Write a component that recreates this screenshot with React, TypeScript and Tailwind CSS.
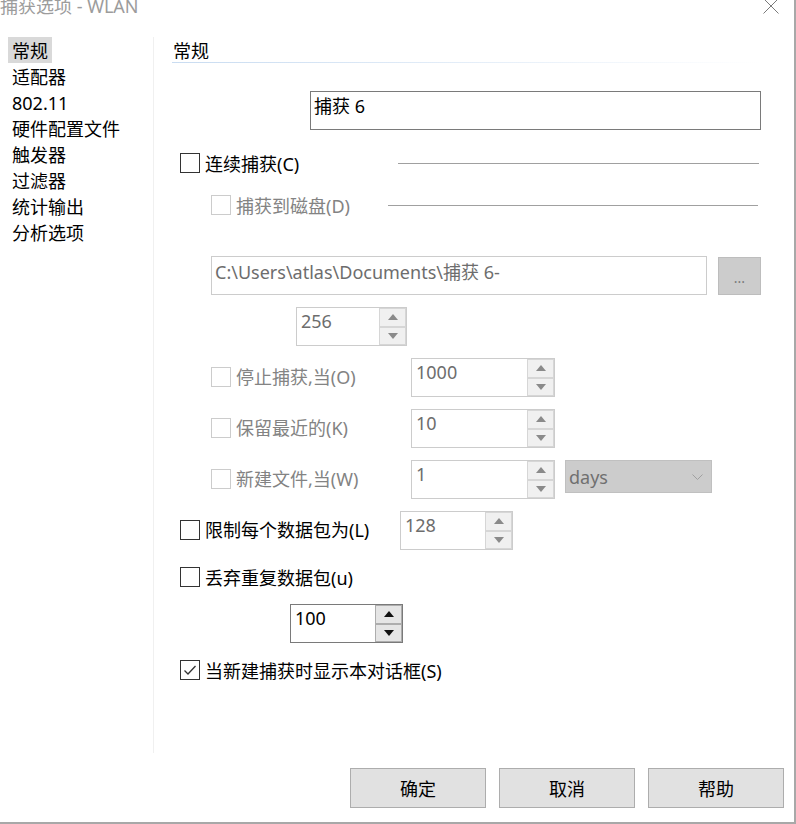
import React from "react"
import clsx from "clsx"

const font = { fontFamily: '"Noto Sans", "Noto Sans CJK SC", sans-serif' }

const navItems = ["常规", "适配器", "802.11", "硬件配置文件", "触发器", "过滤器", "统计输出", "分析选项"]

const Check = ({ checked, disabled }: { checked?: boolean; disabled?: boolean }) => (
  <span
    className={clsx(
      "flex h-[20px] w-[20px] shrink-0 items-center justify-center border bg-white",
      disabled ? "border-[#cccccc]" : "border-[#333333]"
    )}
  >
    {checked && (
      <svg width="16" height="16" viewBox="0 0 16 16">
        <polyline points="2.5,8.5 6,12 13.5,4" fill="none" stroke="#333333" strokeWidth="1.3" />
      </svg>
    )}
  </span>
)

const Arrow = ({ up, disabled }: { up?: boolean; disabled?: boolean }) => (
  <svg width="10" height="6" viewBox="0 0 10 6">
    <polygon points={up ? "0,6 10,6 5,0" : "0,0 10,0 5,6"} fill={disabled ? "#8a8a8a" : "#111111"} />
  </svg>
)

const Spin = ({ value, width, disabled }: { value: string; width: string; disabled?: boolean }) => (
  <div
    className={clsx(
      "flex h-[39px] shrink-0 border bg-white",
      width,
      disabled ? "border-[#cccccc] text-[#6d6d6d]" : "border-[#7a7a7a] text-black"
    )}
  >
    <div className="flex-1 pl-[4px] pt-[1px] text-[18px] leading-[24px]">{value}</div>
    <div className="flex w-[27px] flex-col">
      <div
        className={clsx(
          "flex flex-1 items-center justify-center border",
          disabled ? "border-[#d6d6d6] bg-[#f0f0f0]" : "border-[#adadad] bg-[#e5e5e5]"
        )}
      >
        <Arrow up disabled={disabled} />
      </div>
      <div
        className={clsx(
          "flex flex-1 items-center justify-center border",
          disabled ? "border-[#d6d6d6] bg-[#f0f0f0]" : "border-[#adadad] bg-[#e5e5e5]"
        )}
      >
        <Arrow disabled={disabled} />
      </div>
    </div>
  </div>
)

const Label = ({ text, disabled, width }: { text: string; disabled?: boolean; width: string }) => (
  <span
    className={clsx(
      "ml-[5px] shrink-0 whitespace-nowrap pt-[1px] text-[18px] leading-[20px]",
      width,
      disabled ? "text-[#838383]" : "text-black"
    )}
  >
    {text}
  </span>
)

export default function App() {
  return (
    <div
      className="flex h-[824px] w-[796px] flex-col overflow-hidden border-b-2 border-r-2 border-[#a8a8a8] bg-white text-black"
      style={font}
    >
      {/* title bar */}
      <div className="flex h-[37px] shrink-0 items-start">
        <span className="-mt-[6px] whitespace-nowrap text-[18px] leading-[24px] text-[#9c9c9c]">
          捕获选项 - WLAN
        </span>
        <svg className="ml-auto mr-[15px] -mt-[2px]" width="16" height="16" viewBox="0 0 16 16">
          <path d="M0.5 0.5 L15.5 15.5 M15.5 0.5 L0.5 15.5" stroke="#7a7a7a" strokeWidth="1" />
        </svg>
      </div>

      {/* body */}
      <div className="flex h-[716px] shrink-0">
        <div className="w-[154px] shrink-0 border-r border-[#f0f0f0] pl-[8px]">
          {navItems.map((item, i) => (
            <div key={item} className="flex">
              <span
                className={clsx(
                  "h-[26px] px-[4px] pt-[2px] text-[18px] leading-[25px] whitespace-nowrap",
                  i === 0 && "bg-[#d9d9d9]"
                )}
              >
                {item}
              </span>
            </div>
          ))}
        </div>

        <div className="flex flex-1 flex-col">
          <div className="ml-[19px] h-[25px] pt-[3px] text-[18px] leading-[22px]">常规</div>
          <div className="ml-[18px] h-px w-[588px] bg-linear-to-r from-[#c9dcf1] to-[#ffffff]" />

          <div className="ml-[156px] mt-[28px] flex h-[39px] w-[451px] border border-[#7a7a7a] pl-[3px] pt-[2px] text-[18px] leading-[24px]">
            捕获 6
          </div>

          <div className="ml-[26px] mt-[23px] flex h-[20px] items-center">
            <Check />
            <Label text="连续捕获(C)" width="w-[193px]" />
            <div className="h-px w-[361px] bg-[#a0a0a0]" />
          </div>

          <div className="ml-[57px] mt-[22px] flex h-[20px] items-center">
            <Check disabled />
            <Label text="捕获到磁盘(D)" width="w-[152px]" disabled />
            <div className="h-px w-[370px] bg-[#a0a0a0]" />
          </div>

          <div className="ml-[57px] mt-[41px] flex h-[39px] items-start">
            <div className="h-[39px] w-[496px] border border-[#cccccc] pl-[3px] pt-[3px] text-[18px] leading-[24px] text-[#6d6d6d] whitespace-nowrap">
              C:\Users\atlas\Documents\捕获 6-
            </div>
            <div className="ml-[11px] mt-[1px] flex h-[38px] w-[43px] items-center justify-center border border-[#bdbdbd] bg-[#cccccc] pt-[4px] text-[14px] leading-[20px] text-[#7a7a7a]">
              ...
            </div>
          </div>

          <div className="ml-[142px] mt-[12px] flex">
            <Spin value="256" width="w-[111px]" disabled />
          </div>

          <div className="ml-[57px] mt-[12px] flex h-[39px] items-start">
            <div className="mt-[8px] flex items-center">
              <Check disabled />
              <Label text="停止捕获,当(O)" width="w-[175px]" disabled />
            </div>
            <Spin value="1000" width="w-[144px]" disabled />
          </div>

          <div className="ml-[57px] mt-[12px] flex h-[39px] items-start">
            <div className="mt-[8px] flex items-center">
              <Check disabled />
              <Label text="保留最近的(K)" width="w-[175px]" disabled />
            </div>
            <Spin value="10" width="w-[144px]" disabled />
          </div>

          <div className="ml-[57px] mt-[12px] flex h-[39px] items-start">
            <div className="mt-[8px] flex items-center">
              <Check disabled />
              <Label text="新建文件,当(W)" width="w-[175px]" disabled />
            </div>
            <Spin value="1" width="w-[144px]" disabled />
            <div className="ml-[10px] flex h-[33px] w-[147px] items-center border border-[#c0c0c0] bg-[#cccccc] pl-[3px] pr-[8px] text-[18px] leading-[24px] text-[#707070]">
              <span>days</span>
              <svg className="ml-auto" width="11" height="6" viewBox="0 0 11 6">
                <polyline points="0.5,0.5 5.5,5.5 10.5,0.5" fill="none" stroke="#a0a0a0" strokeWidth="1" />
              </svg>
            </div>
          </div>

          <div className="ml-[26px] mt-[12px] flex h-[39px] items-start">
            <div className="mt-[8px] flex items-center">
              <Check />
              <Label text="限制每个数据包为(L)" width="w-[195px]" />
            </div>
            <Spin value="128" width="w-[113px]" disabled />
          </div>

          <div className="ml-[26px] mt-[17px] flex h-[20px] items-center">
            <Check />
            <Label text="丢弃重复数据包(u)" width="w-[200px]" />
          </div>

          <div className="ml-[136px] mt-[17px] flex">
            <Spin value="100" width="w-[113px]" />
          </div>

          <div className="ml-[26px] mt-[17px] flex h-[20px] items-center">
            <Check checked />
            <Label text="当新建捕获时显示本对话框(S)" width="w-[300px]" />
          </div>
        </div>
      </div>

      {/* footer */}
      <div className="mt-[15px] flex justify-end gap-[13px] pr-[10px]">
        {["确定", "取消", "帮助"].map((b) => (
          <div
            key={b}
            className="flex h-[40px] w-[136px] items-center justify-center border border-[#adadad] bg-[#e1e1e1] pt-[1px] text-[18px] leading-[24px]"
          >
            {b}
          </div>
        ))}
      </div>
    </div>
  )
}
